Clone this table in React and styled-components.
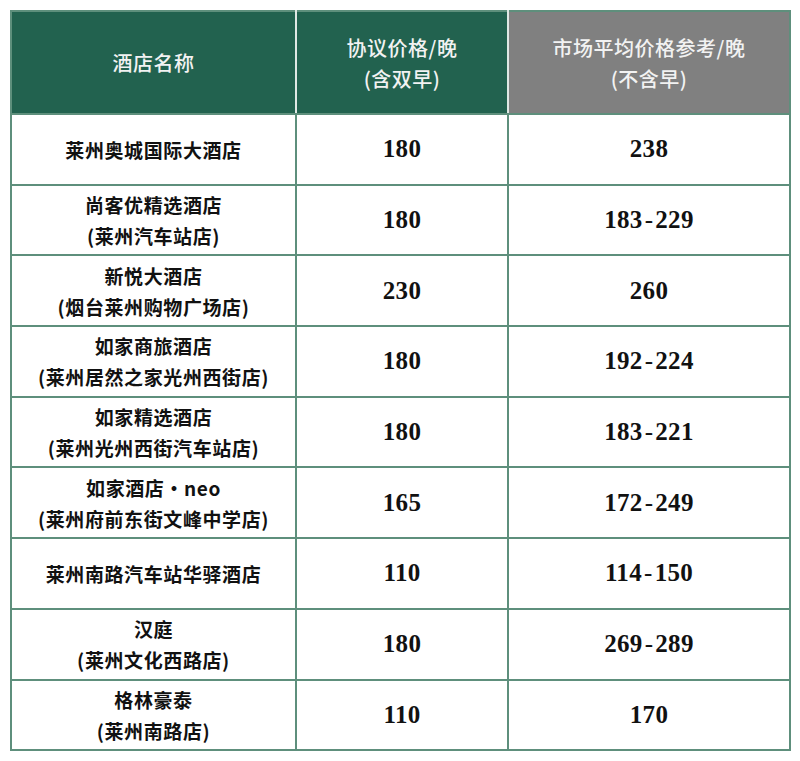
import React from 'react'
import styled, { createGlobalStyle } from 'styled-components'

const GlobalStyle = createGlobalStyle`
  html, body {
    margin: 0;
    padding: 0;
    background: #ffffff;
  }
`;

//Styled
const Page = styled.div`
  width: 800px;
  height: 761px;
  padding: 10px 0 0 10px;
  box-sizing: border-box;
  background: #fff;
`;

const Table = styled.table`
  width: 779px;
  border-collapse: collapse;
  border: 2px solid #5e8f7c;
  table-layout: fixed;
`;

const HeadCell = styled.th`
  height: 101px;
  padding: 0;
  background: ${props => props.grey ? '#808080' : '#22624f'};
  color: #f2f2f2;
  font-family: "Noto Sans CJK SC", sans-serif;
  font-size: 20px;
  font-weight: 500;
  line-height: 31px;
  letter-spacing: 0.5px;
  text-align: center;
  vertical-align: middle;
  border-left: 2px solid #dfe8e4;
  border-bottom: 2px solid #5e8f7c;
  &:first-child { border-left: none; }
`;

const Cell = styled.td`
  height: 68.7px;
  padding: 0;
  border: 2px solid #5e8f7c;
  text-align: center;
  vertical-align: middle;
  color: #111;
`;

const Name = styled.div`
  font-family: "Noto Sans CJK SC", sans-serif;
  font-size: 19px;
  font-weight: 700;
  line-height: 31px;
  letter-spacing: 0.6px;
`;

const Price = styled.div`
  font-family: "Liberation Serif", serif;
  font-size: 25px;
  font-weight: 700;
  letter-spacing: 0.3px;
`;

const Dash = styled.span`
  display: inline-block;
  margin: 0 2px;
  font-weight: 400;
`;

const rows = [
  { name: ['莱州奥城国际大酒店'], price: '180', market: ['238'] },
  { name: ['尚客优精选酒店', '(莱州汽车站店)'], price: '180', market: ['183', '229'] },
  { name: ['新悦大酒店', '(烟台莱州购物广场店)'], price: '230', market: ['260'] },
  { name: ['如家商旅酒店', '(莱州居然之家光州西街店)'], price: '180', market: ['192', '224'] },
  { name: ['如家精选酒店', '(莱州光州西街汽车站店)'], price: '180', market: ['183', '221'] },
  { name: ['如家酒店・neo', '(莱州府前东街文峰中学店)'], price: '165', market: ['172', '249'] },
  { name: ['莱州南路汽车站华驿酒店'], price: '110', market: ['114', '150'] },
  { name: ['汉庭', '(莱州文化西路店)'], price: '180', market: ['269', '289'] },
  { name: ['格林豪泰', '(莱州南路店)'], price: '110', market: ['170'] },
];

const App = () => {
  return (
    <Page>
      <GlobalStyle />
      <Table>
        <colgroup>
          <col style={{ width: 285 }} />
          <col style={{ width: 212 }} />
          <col style={{ width: 282 }} />
        </colgroup>
        <thead>
          <tr>
            <HeadCell>酒店名称</HeadCell>
            <HeadCell>协议价格/晚<br />(含双早)</HeadCell>
            <HeadCell grey>市场平均价格参考/晚<br />(不含早)</HeadCell>
          </tr>
        </thead>
        <tbody>
          {rows.map((r, i) => (
            <tr key={i}>
              <Cell>
                {r.name.map((line, j) => <Name key={j}>{line}</Name>)}
              </Cell>
              <Cell><Price>{r.price}</Price></Cell>
              <Cell>
                <Price>
                  {r.market[0]}
                  {r.market[1] && <><Dash>-</Dash>{r.market[1]}</>}
                </Price>
              </Cell>
            </tr>
          ))}
        </tbody>
      </Table>
    </Page>
  )
}

export default App;
